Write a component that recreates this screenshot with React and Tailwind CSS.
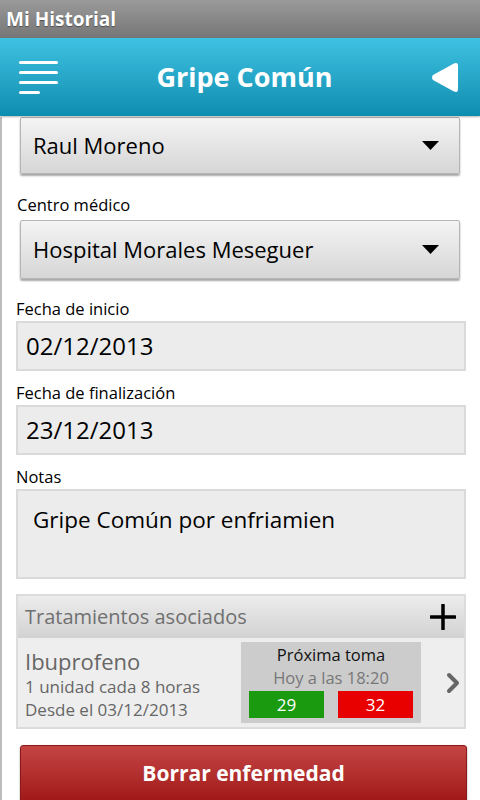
import React from "react";

const Dropdown = ({ value, className = "" }) => (
  <div
    className={`ml-[18px] mr-5 flex items-center justify-between rounded-[2px] border border-[#b5b5b5] bg-gradient-to-b from-[#f4f4f4] to-[#d6d6d6] pl-3 pr-5 shadow-[0_2px_2px_rgba(0,0,0,0.35)] ${className}`}
  >
    <span className="text-[22px] text-black">{value}</span>
    <svg width="17" height="9" viewBox="0 0 17 9">
      <path d="M0 0 L17 0 L8.5 9 Z" fill="#000" />
    </svg>
  </div>
);

const Field = ({ label, value, tall }) => (
  <div className="ml-[14px] mr-[14px]">
    <div className="mb-[2px] text-[16.5px] leading-[20px] text-black">{label}</div>
    <div
      className={`border-2 border-[#dadada] bg-[#ececec] text-black ${
        tall ? "h-[90px] px-[15px] pt-[12px] text-[22.5px]" : "flex h-[50px] items-center px-[8px] text-[24px]"
      }`}
    >
      {value}
    </div>
  </div>
);

export default function App() {
  return (
    <div
      className="relative h-[800px] w-[480px] overflow-hidden bg-white"
      style={{ fontFamily: '"Open Sans", "Noto Sans", sans-serif' }}
    >
      {/* Status bar */}
      <div className="flex h-[38px] items-center bg-gradient-to-b from-[#9a9a9a] to-[#767676] px-[6px]">
        <span className="text-[19px] font-bold text-white [text-shadow:0_1px_1px_rgba(0,0,0,0.4)]">
          Mi Historial
        </span>
      </div>

      {/* Header */}
      <div className="relative z-10 flex h-[78px] items-center justify-between bg-gradient-to-b from-[#3ec2e2] to-[#0a8db0] pl-[19px] pr-[22px] shadow-[0_1px_2px_rgba(0,0,0,0.3)]">
        <div className="flex w-[39px] flex-col gap-[7px]">
          <div className="h-[3px] w-[39px] rounded-full bg-white" />
          <div className="h-[3px] w-[39px] rounded-full bg-white" />
          <div className="h-[3px] w-[39px] rounded-full bg-white" />
          <div className="h-[3px] w-[21px] rounded-full bg-white" />
        </div>
        <span className="text-[27px] font-bold text-white">Gripe Común</span>
        <svg width="27" height="31" viewBox="0 0 27 31">
          <path d="M25 1 Q27 1 27 4 L27 27 Q27 30 25 30 Q24 30 22 29 L2 18 Q0 15.5 2 13 L22 2 Q24 1 25 1 Z" fill="#fff" />
        </svg>
      </div>

      {/* Content */}
      <div className="border-l-2 border-[#bdbdbd] pb-10">
        <Dropdown value="Raul Moreno" className="mt-[1px] h-[57px]" />

        <div className="ml-[15px] mt-[20px] mb-[4px] text-[16.5px] leading-[22px] text-black">Centro médico</div>
        <Dropdown value="Hospital Morales Meseguer" className="h-[59px]" />

        <div className="mt-[20px] flex flex-col gap-[12px]">
          <Field label="Fecha de inicio" value="02/12/2013" />
          <Field label="Fecha de finalización" value="23/12/2013" />
          <Field label="Notas" value="Gripe Común por enfriamien" tall />
        </div>

        {/* Treatments */}
        <div className="ml-[14px] mr-[14px] mt-[15px] border-2 border-[#dcdcdc]">
          <div className="flex h-[42px] items-center justify-between bg-gradient-to-b from-[#ececec] to-[#d2d2d2] pl-[7px] pr-[8px]">
            <span className="text-[20px] text-[#707070]">Tratamientos asociados</span>
            <svg width="26" height="26" viewBox="0 0 26 26">
              <path d="M13 1 V25 M1 13 H25" stroke="#000" strokeWidth="3.5" strokeLinecap="round" />
            </svg>
          </div>
          <div className="flex h-[89px] items-center bg-[#eeeeee] pl-[7px]">
            <div className="flex flex-1 flex-col pt-[3px] text-[#666666]">
              <span className="text-[22px] leading-[28px]">Ibuprofeno</span>
              <span className="text-[17px] leading-[23px]">1 unidad cada 8 horas</span>
              <span className="text-[17px] leading-[23px]">Desde el 03/12/2013</span>
            </div>
            <div className="flex h-[81px] w-[180px] flex-col items-center bg-[#cccccc] px-[8px] pt-[2px]">
              <span className="text-[16.5px] leading-[22px] text-[#111]">Próxima toma</span>
              <span className="text-[16.5px] leading-[23px] text-[#777]">Hoy a las 18:20</span>
              <div className="mt-[2px] flex w-full justify-between">
                <div className="flex h-[27px] w-[75px] items-center justify-center bg-[#1a9a0e] text-[17px] text-white">29</div>
                <div className="flex h-[27px] w-[75px] items-center justify-center bg-[#e80000] text-[17px] text-white">32</div>
              </div>
            </div>
            <div className="flex w-[43px] pl-[25px]">
              <svg width="14" height="22" viewBox="0 0 14 22">
                <path d="M3 3 L11 11 L3 19" stroke="#666" strokeWidth="4" fill="none" strokeLinecap="round" strokeLinejoin="round" />
              </svg>
            </div>
          </div>
        </div>

        {/* Delete button */}
        <div className="ml-[18px] mr-[13px] mt-[16px] flex h-[58px] items-center justify-center rounded-[3px] border border-[#8a1a1a] bg-gradient-to-b from-[#c44444] to-[#a01616] shadow-[0_1px_2px_rgba(0,0,0,0.4)]">
          <span className="text-[21px] font-bold text-white">Borrar enfermedad</span>
        </div>
      </div>
    </div>
  );
}
